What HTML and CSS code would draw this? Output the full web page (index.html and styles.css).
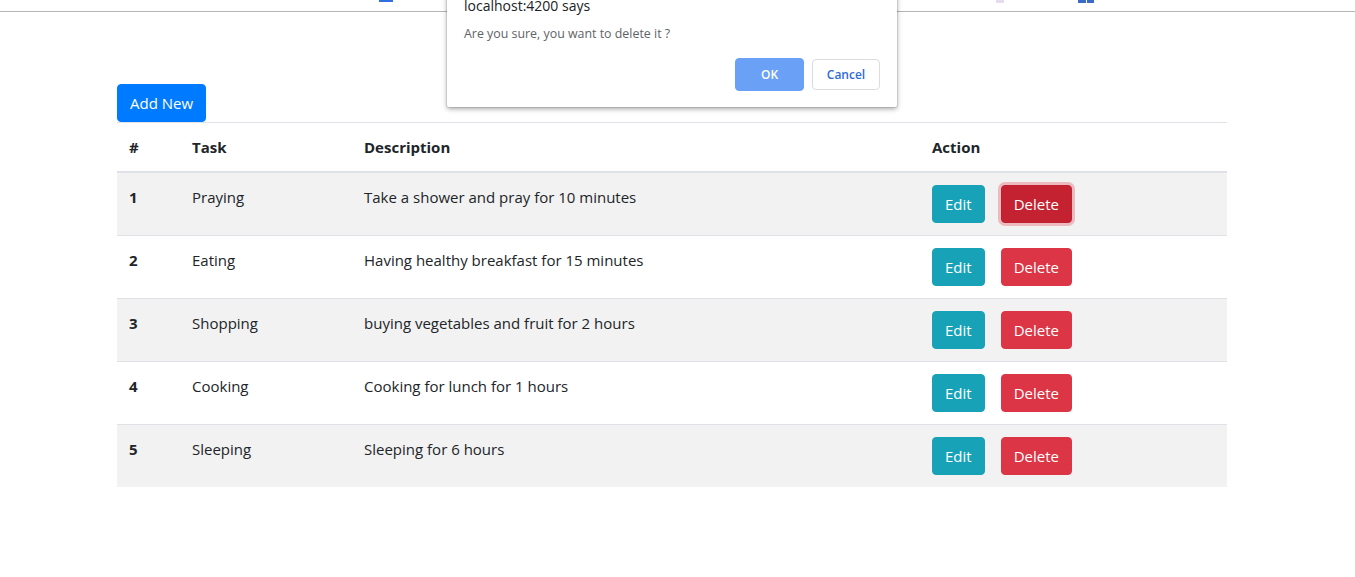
FILE: index.html
```html
<!DOCTYPE html>
<html>
<head>
<meta charset="utf-8">
<link rel="stylesheet" href="styles.css">
</head>
<body>
<div class="topbar">
  <span class="mark mark-a"></span>
  <span class="mark mark-b"></span>
  <span class="mark mark-c"></span>
  <span class="mark mark-d"></span>
</div>
<main class="container">
  <button class="btn btn-primary add">Add New</button>
  <table class="table">
    <thead>
      <tr><th class="c1">#</th><th class="c2">Task</th><th class="c3">Description</th><th class="c4">Action</th></tr>
    </thead>
    <tbody>
      <tr class="odd"><th>1</th><td>Praying</td><td>Take a shower and pray for 10 minutes</td><td><button class="btn btn-info">Edit</button><button class="btn btn-danger active">Delete</button></td></tr>
      <tr><th>2</th><td>Eating</td><td>Having healthy breakfast for 15 minutes</td><td><button class="btn btn-info">Edit</button><button class="btn btn-danger">Delete</button></td></tr>
      <tr class="odd"><th>3</th><td>Shopping</td><td>buying vegetables and fruit for 2 hours</td><td><button class="btn btn-info">Edit</button><button class="btn btn-danger">Delete</button></td></tr>
      <tr><th>4</th><td>Cooking</td><td>Cooking for lunch for 1 hours</td><td><button class="btn btn-info">Edit</button><button class="btn btn-danger">Delete</button></td></tr>
      <tr class="odd"><th>5</th><td>Sleeping</td><td>Sleeping for 6 hours</td><td><button class="btn btn-info">Edit</button><button class="btn btn-danger">Delete</button></td></tr>
    </tbody>
  </table>
</main>
<div class="dialog">
  <div class="dialog-title">localhost:4200 says</div>
  <div class="dialog-msg">Are you sure, you want to delete it ?</div>
  <div class="dialog-actions">
    <button class="dbtn dbtn-ok">OK</button>
    <button class="dbtn dbtn-cancel">Cancel</button>
  </div>
</div>
</body>
</html>
```
FILE: styles.css
```css
* { box-sizing: border-box; }
body {
  margin: 0;
  font-family: "Open Sans", "Noto Sans", sans-serif;
  font-size: 15px;
  line-height: 24px;
  color: #212529;
  background: #fff;
}
.topbar {
  height: 12px;
  border-bottom: 1px solid #b5b5b5;
  display: flex;
  align-items: flex-start;
}
.mark { display: block; background: #2f6fe0; }
.mark-a { margin-left: 379px; width: 14px; height: 2px; }
.mark-b { margin-left: 603px; width: 8px; height: 3px; background: #e6dcef; }
.mark-c { margin-left: 74px; width: 8px; height: 3px; background: #3a6bc8; }
.mark-d { margin-left: 1px; width: 7px; height: 3px; background: #3a6bc8; }

.container {
  width: 1110px;
  margin-left: 117px;
  padding-top: 72px;
}
.btn {
  display: inline-block;
  font-family: inherit;
  font-size: 15px;
  line-height: 24px;
  padding: 6px 12px;
  border: 1px solid transparent;
  border-radius: 4px;
  color: #fff;
  cursor: pointer;
}
.btn-primary { background: #007bff; border-color: #007bff; }
.btn-info { background: #17a2b8; border-color: #17a2b8; }
.btn-danger { background: #dc3545; border-color: #dc3545; margin-left: 16px; }
.btn-danger.active { background: #c42231; border-color: #bd2130; box-shadow: 0 0 0 3px rgba(225,83,97,.35); }
.add { display: block; }

.table {
  width: 1110px;
  border-collapse: collapse;
  table-layout: fixed;
}
.table th, .table td {
  padding: 12px;
  text-align: left;
  vertical-align: top;
  border-top: 1px solid #dee2e6;
}
.table thead th {
  border-bottom: 2px solid #dee2e6;
  vertical-align: bottom;
}
.table tbody tr:first-child th, .table tbody tr:first-child td { border-top: none; }
.table tbody tr.odd { background: #f2f2f2; }
.c1 { width: 63px; }
.c2 { width: 172px; }
.c3 { width: 568px; }
.c4 { width: 307px; }

.dialog {
  position: absolute;
  left: 447px;
  top: -14px;
  width: 450px;
  height: 121px;
  background: #fff;
  border-radius: 2px;
  box-shadow: 0 2px 5px rgba(0,0,0,.35), 0 0 0 1px rgba(0,0,0,.08);
  padding: 0 17px 0 17px;
  font-family: "Open Sans", "Noto Sans", sans-serif;
}
.dialog-title {
  font-size: 14px;
  line-height: 20px;
  margin-top: 10px;
  color: #202124;
}
.dialog-msg {
  font-size: 12.4px;
  line-height: 16px;
  margin-top: 10px;
  color: #5f6368;
}
.dialog-actions {
  display: flex;
  justify-content: flex-end;
  gap: 8px;
  margin-top: 16px;
}
.dbtn {
  font-family: inherit;
  font-size: 12px;
  font-weight: 600;
  border-radius: 4px;
  height: 33px;
}
.dbtn-ok {
  width: 69px;
  background: #6aa0f6;
  border: 1px solid #6aa0f6;
  color: #fff;
}
.dbtn-cancel {
  width: 68px;
  height: 31px;
  margin-top: 1px;
  background: #fff;
  border: 1px solid #dadce0;
  color: #2f6ad8;
  font-weight: 600;
}
```
